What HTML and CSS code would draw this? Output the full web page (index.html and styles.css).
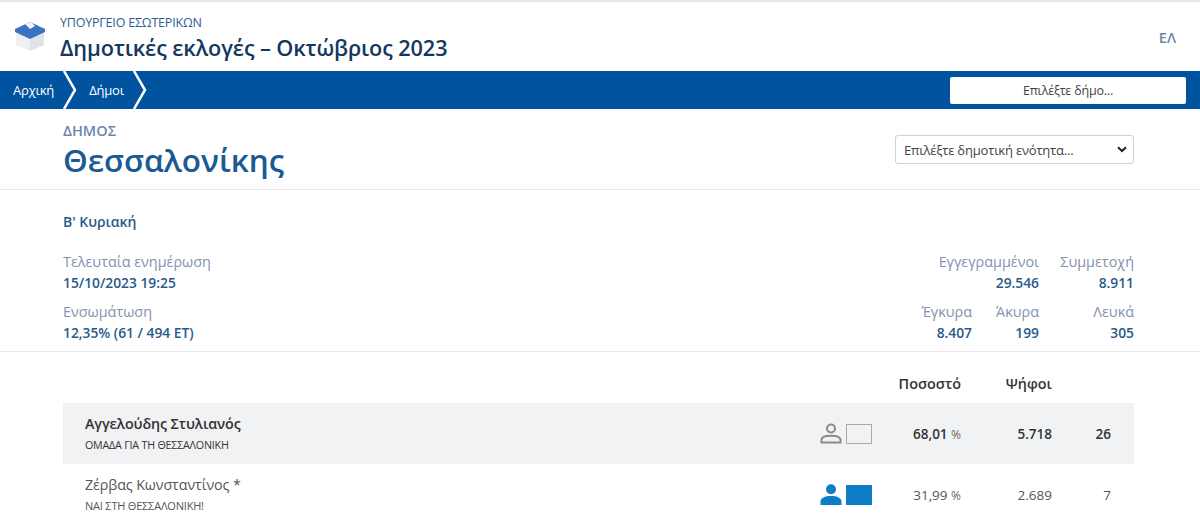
FILE: index.html
```html
<!DOCTYPE html>
<html lang="el">
<head>
  <meta charset="UTF-8">
  <meta name="viewport" content="width=device-width, initial-scale=1">
  <title>Δημοτικές εκλογές – Οκτώβριος 2023</title>
  <link rel="stylesheet" href="styles.css">
</head>
<body>
  <header class="top">
    <svg class="logo" width="32" height="30" viewBox="0 0 32 30">
      <path d="M2 11 L16 17 L30 11 V24 L16 30 L2 24 Z" fill="#eef0f3"/>
      <path d="M16 17 L30 11 V24 L16 30 Z" fill="#dfe3e8"/>
      <path d="M1 8 L16 1 L31 8 V11 L16 18 L1 11 Z" fill="#3b73c4"/>
      <path d="M11 3 L17 1 L21 5 L16 8 Z" fill="#f2f4f7"/>
    </svg>
    <div class="top-titles">
      <div class="ministry">ΥΠΟΥΡΓΕΙΟ ΕΣΩΤΕΡΙΚΩΝ</div>
      <div class="site-title">Δημοτικές εκλογές – Οκτώβριος 2023</div>
    </div>
    <a class="lang">ΕΛ</a>
  </header>

  <nav class="crumbs">
    <a class="crumb crumb-first">Αρχική</a>
    <svg class="chev" width="14" height="38" viewBox="0 0 14 38"><path d="M1 0 L12 19 L1 38" fill="none" stroke="#fff" stroke-width="2.5"/></svg>
    <a class="crumb crumb-second">Δήμοι</a>
    <svg class="chev" width="14" height="38" viewBox="0 0 14 38"><path d="M1 0 L12 19 L1 38" fill="none" stroke="#fff" stroke-width="2.5"/></svg>
    <button class="pick-municipality">Επιλέξτε δήμο...</button>
  </nav>

  <section class="head">
    <div>
      <div class="head-label">ΔΗΜΟΣ</div>
      <h1>Θεσσαλονίκης</h1>
    </div>
    <div class="pick-unit">
      <span>Επιλέξτε δημοτική ενότητα...</span>
      <svg width="10" height="7" viewBox="0 0 10 7"><path d="M1 1.2 L5 5 L9 1.2" fill="none" stroke="#222" stroke-width="2"/></svg>
    </div>
  </section>

  <section class="info">
    <div class="round">Β' Κυριακή</div>
    <div class="stats">
      <div class="stats-left">
        <div class="stat"><span class="lbl">Τελευταία ενημέρωση</span><b>15/10/2023 19:25</b></div>
        <div class="stat"><span class="lbl">Ενσωμάτωση</span><b>12,35% (61 / 494 ΕΤ)</b></div>
      </div>
      <div class="stats-right">
        <div class="stat stat-wide"><span class="lbl">Εγγεγραμμένοι</span><b>29.546</b></div>
        <div class="stat"><span class="lbl">Συμμετοχή</span><b>8.911</b></div>
        <div class="stat"><span class="lbl">Έγκυρα</span><b>8.407</b></div>
        <div class="stat"><span class="lbl">Άκυρα</span><b>199</b></div>
        <div class="stat"><span class="lbl">Λευκά</span><b>305</b></div>
      </div>
    </div>
  </section>

  <section class="results">
    <div class="row row-head">
      <div class="col-name"></div>
      <div class="col-pct">Ποσοστό</div>
      <div class="col-votes">Ψήφοι</div>
      <div class="col-seats"></div>
    </div>
    <div class="row row-win">
      <div class="col-name">
        <div class="cand">Αγγελούδης Στυλιανός</div>
        <div class="party">ΟΜΑΔΑ ΓΙΑ ΤΗ ΘΕΣΣΑΛΟΝΙΚΗ</div>
      </div>
      <svg class="person" width="22" height="21" viewBox="0 0 22 21"><circle cx="11" cy="5.5" r="4" fill="none" stroke="#8a8a8a" stroke-width="2"/><path d="M1.5 19.5 V17 C1.5 14.5 5 12.8 11 12.8 C17 12.8 20.5 14.5 20.5 17 V19.5 Z" fill="none" stroke="#8a8a8a" stroke-width="2"/></svg>
      <span class="swatch swatch-empty"></span>
      <div class="col-pct">68,01 <small>%</small></div>
      <div class="col-votes">5.718</div>
      <div class="col-seats">26</div>
    </div>
    <div class="row row-other">
      <div class="col-name">
        <div class="cand">Ζέρβας Κωνσταντίνος *</div>
        <div class="party">ΝΑΙ ΣΤΗ ΘΕΣΣΑΛΟΝΙΚΗ!</div>
      </div>
      <svg class="person" width="22" height="21" viewBox="0 0 22 21"><circle cx="11" cy="5.2" r="5" fill="#0f7cc7"/><path d="M0.5 21 V17.5 C0.5 14 5 12 11 12 C17 12 21.5 14 21.5 17.5 V21 Z" fill="#0f7cc7"/></svg>
      <span class="swatch swatch-full"></span>
      <div class="col-pct">31,99 <small>%</small></div>
      <div class="col-votes">2.689</div>
      <div class="col-seats">7</div>
    </div>
  </section>
</body>
</html>
```

FILE: styles.css
```css
* {
  margin: 0;
  padding: 0;
  box-sizing: border-box;
  font-family: 'Open Sans', 'Noto Sans', sans-serif;
}
body {
  background: #fff;
  color: #333;
  height: 531px;
  overflow: hidden;
}
.top {
  height: 71px;
  border-top: 2px solid #e8e8e8;
  display: flex;
  align-items: flex-start;
  padding: 0 24px 0 14px;
}
.logo {
  margin-top: 19px;
}
.top-titles {
  margin-left: 14px;
  margin-top: 13px;
}
.ministry {
  font-size: 12.5px;
  line-height: 16px;
  color: #2f5c8f;
  letter-spacing: -0.2px;
}
.site-title {
  font-size: 21.7px;
  line-height: 30px;
  margin-top: 2px;
  font-weight: 600;
  color: #14375f;
  letter-spacing: -0.1px;
}
.lang {
  margin-left: auto;
  margin-top: 26px;
  font-size: 14.5px;
  font-weight: 600;
  color: #6b86ad;
}
.crumbs {
  height: 38px;
  background: #00539f;
  display: flex;
  align-items: center;
  padding-right: 14px;
}
.crumb {
  color: #fff;
  font-size: 13px;
  letter-spacing: -0.2px;
}
.crumb-first {
  margin-left: 13px;
  margin-right: 9px;
}
.crumb-second {
  margin-left: 12px;
  margin-right: 9px;
}
.pick-municipality {
  margin-left: auto;
  width: 236px;
  height: 27px;
  background: #fff;
  border: none;
  border-radius: 2px;
  font-size: 12.5px;
  letter-spacing: -0.2px;
  color: #444;
}
.head {
  height: 81px;
  border-bottom: 1px solid #e6e8ec;
  padding: 13px 66px 0 63px;
  display: flex;
  justify-content: space-between;
  align-items: flex-start;
}
.head-label {
  font-size: 14.5px;
  line-height: 17px;
  font-weight: 600;
  color: #6b86ad;
}
h1 {
  font-size: 31.5px;
  line-height: 42px;
  font-weight: 600;
  color: #1b5a93;
}
.pick-unit {
  margin-top: 13px;
  width: 239px;
  height: 29px;
  border: 1px solid #cfd3d8;
  border-radius: 3px;
  padding: 0 6px 0 8px;
  display: flex;
  align-items: center;
  justify-content: space-between;
  font-size: 13px;
  letter-spacing: -0.2px;
  color: #444;
}
.info {
  height: 162px;
  border-bottom: 1px solid #e6e8ec;
  padding: 22px 66px 0 63px;
}
.round {
  font-size: 14px;
  line-height: 20px;
  font-weight: 600;
  color: #2a5a8a;
}
.stats {
  display: flex;
  justify-content: space-between;
  margin-top: 20px;
}
.stat {
  display: flex;
  flex-direction: column;
  height: 50px;
}
.lbl {
  font-size: 14.4px;
  line-height: 20px;
  color: #7f93b0;
}
.stat b {
  font-size: 13.8px;
  line-height: 22px;
  font-weight: 600;
  color: #2a5a8a;
}
.stats-right {
  display: grid;
  grid-template-columns: auto 67px 95px;
  justify-content: end;
}
.stats-right .stat {
  align-items: flex-end;
}
.stat-wide {
  grid-column: 1 / 3;
}
.results {
  padding: 0 66px 0 63px;
}
.row {
  display: flex;
  align-items: center;
}
.row-head {
  height: 51px;
  padding-top: 12px;
  font-size: 14.4px;
  font-weight: 600;
  color: #333;
}
.row-win,
.row-other {
  height: 61px;
  padding-left: 22px;
}
.row-win {
  background: #f1f2f4;
}
.col-name {
  flex: 1;
}
.cand {
  font-size: 14.3px;
  line-height: 20px;
  letter-spacing: -0.1px;
}
.party {
  font-size: 10.7px;
  line-height: 16px;
  margin-top: 3px;
  letter-spacing: -0.2px;
}
.row-win .cand {
  font-weight: 600;
}
.row-win .party {
  color: #333;
}
.row-other .cand {
  color: #555;
}
.row-other .party {
  color: #555;
  font-size: 11px;
}
.person {
  margin-right: 4px;
}
.swatch {
  width: 26px;
  height: 20px;
}
.swatch-empty {
  border: 1px solid #a9a9a9;
}
.swatch-full {
  background: #0f7cc7;
}
.col-pct {
  width: 89px;
  text-align: right;
  font-size: 13.5px;
}
.col-votes {
  width: 91px;
  text-align: right;
  font-size: 13.5px;
}
.col-seats {
  width: 82px;
  text-align: right;
  padding-right: 23px;
  font-size: 13.5px;
}
.row-head .col-pct,
.row-head .col-votes {
  font-size: 14.4px;
}
.col-pct small {
  font-size: 12px;
  color: #666;
}
.row-win .col-pct,
.row-win .col-votes,
.row-win .col-seats {
  font-weight: 600;
}
.row-win .col-pct small {
  font-weight: 400;
}
.row-other .col-pct,
.row-other .col-votes,
.row-other .col-seats {
  color: #555;
}
```
